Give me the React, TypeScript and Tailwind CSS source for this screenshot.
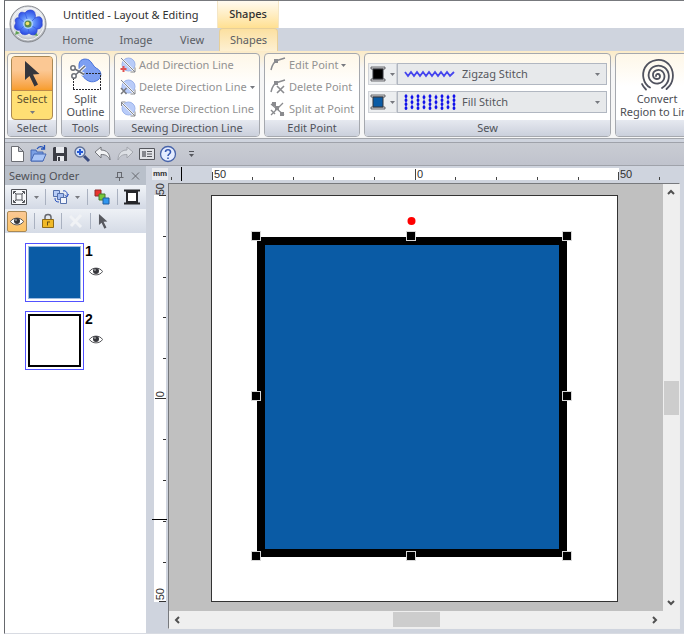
import type {ReactNode} from 'react'
import clsx from 'clsx'

type IconProps = {className?: string}

const FlowerLogo = () => (
  <svg width="38" height="38" viewBox="0 0 38 38">
    <defs>
      <radialGradient id="orb" cx="50%" cy="40%" r="60%">
        <stop offset="0%" stopColor="#ffffff"/>
        <stop offset="70%" stopColor="#dfe2e7"/>
        <stop offset="100%" stopColor="#a5a8ae"/>
      </radialGradient>
      <radialGradient id="bloom" cx="50%" cy="50%" r="52%">
        <stop offset="0%" stopColor="#c9e2ff"/>
        <stop offset="45%" stopColor="#5f90fa"/>
        <stop offset="100%" stopColor="#2a48e2"/>
      </radialGradient>
    </defs>
    <circle cx="19" cy="19" r="18" fill="url(#orb)" stroke="#85888e"/>
    <circle cx="19" cy="19" r="16" fill="none" stroke="#f7f8fa"/>
    <path d="M7 26L6 30L11 28ZM27 27L29 31L24 30Z" fill="#5fa052"/>
    <path
      d="M10 13C9 8 12 6 16 8C18 4 26 4 26 9C27 11 26 12 26 13C31 10 34 13 33 18C34 22 31 24 28 24C29 29 24 32 20 28C17 31 11 30 11 25C6 26 4 22 7 18C5 15 7 12 10 13Z"
      fill="url(#bloom)" stroke="#2e46cf" strokeWidth="0.800"
    />
    <path d="M16 8L18 14M26 13L22 17M28 24L23 21M20 28L19 23M11 25L15 21M10 13L15 17" stroke="#3a5ee6" strokeWidth="0.800"/>
    <circle cx="19" cy="19" r="5" fill="#a5d0ff"/>
    <circle cx="19" cy="19" r="3.500" fill="#5d8a4e"/>
    <circle cx="18.500" cy="18.500" r="1.800" fill="#f4e36b"/>
  </svg>
)

const CursorIcon = ({className}: IconProps) => (
  <svg className={className} viewBox="0 0 16 26">
    <path d="M1 0L1 19L5.500 15L10.500 25.500L14 23.500L9 13.500L15.500 13Z" fill="#35363c"/>
  </svg>
)

const SplitIcon = () => (
  <svg width="32" height="34" viewBox="0 0 32 34">
    <path d="M9 7C9 1 15 0 19 2C22 4 23 8 26 10C33 13 32 21 26 23C19 26 14 20 11 16C9 13 9 11 9 7Z" fill="#7d9ff2" stroke="#4a73d8"/>
    <path d="M3.500 31V20M3 31.500H31M30.500 31V15.500M30 15.500H13" fill="none" stroke="#26262c" strokeDasharray="2 1"/>
    <g fill="none" stroke="#6c6f76" strokeWidth="1.500">
      <path d="M4 11L14 16.500M5 17L15 8" stroke="#fff" strokeWidth="3.500"/>
      <circle cx="3" cy="10" r="2.200" fill="#fff"/>
      <circle cx="4" cy="18" r="2.200" fill="#fff"/>
      <path d="M5 11L14 16.500M6 16.500L15 8"/>
    </g>
  </svg>
)

const DirectionIcon = ({kind}: {kind: 'add' | 'delete' | 'reverse'}) => (
  <svg width="16" height="16" viewBox="0 0 16 16">
    <circle cx="8.500" cy="7.500" r="6.500" fill="#b9ccf9" stroke="#9db4ea"/>
    <path d="M1 1L15 15" stroke="#f4f6fb" strokeWidth="2"/>
    <path d="M1 1L15 15M15 10.500V15H10.500" fill="none" stroke="#85878c"/>
    {kind === 'add' && <path d="M3.500 9V15M0.500 12H6.500" stroke="#e05252" strokeWidth="2"/>}
    {kind === 'delete' && <path d="M1 9L6.500 15M6.500 9L1 15" stroke="#77797e" strokeWidth="1.500"/>}
    {kind === 'reverse' && <path d="M1.500 5V1H5.500" fill="none" stroke="#85878c"/>}
  </svg>
)

const PointIcon = ({kind}: {kind: 'edit' | 'delete' | 'split'}) => (
  <svg width="16" height="16" viewBox="0 0 16 16" fill="none" stroke="#8a8b8f">
    {kind === 'split' ? (
      <>
        <path d="M1 3L14 14M1 14L13 2" strokeWidth="1.300"/>
        <path d="M2 1H6V5H2ZM5 5H9V9H5ZM10 11H14V15H10Z" fill="#8a8b8f" stroke="none"/>
        <path d="M1 9L5 13" strokeWidth="1.500"/>
      </>
    ) : (
      <>
        <path d="M1 13C2 8 4 5 7 3.500L15 1" strokeWidth="1.500"/>
        <path d="M4 2H8V6H4Z" fill="#8a8b8f" stroke="none"/>
        {kind === 'delete' && <path d="M7 7L14 14M14 7L7 14" strokeWidth="1.600"/>}
      </>
    )}
  </svg>
)

const SpoolIcon = ({color}: {color: string}) => (
  <svg width="16" height="16" viewBox="0 0 16 16">
    <path d="M1 1H15V3H1ZM1 13H15V15H1Z" fill="#d9dadd" stroke="#4b4c52" strokeWidth="0.800"/>
    <path d="M3 3H13V13H3Z" fill={color} stroke="#33343a"/>
  </svg>
)

const SpiralIcon = () => (
  <svg width="34" height="34" viewBox="0 0 34 34" fill="none" stroke="#50525e" strokeWidth="1.800" strokeLinecap="round">
    <path d="M16 18C16 15 20 15.500 20 18.500C20 22 13.500 22 13 17.500C12.500 12 19 10.500 22.500 13.500C26.500 18 24 25 18 25.500C11 26 7.500 20 9 14.500C11 7.500 19 6 24.500 9.500C30 13.500 30 22 26 26.500C25 28 23.500 29 22 30"/>
    <path d="M10 29.500C3 25.500 1.500 16 5 9.500C10 1 22 -0.500 28.500 6C34.500 12.500 34 22 29.500 28L26.500 31"/>
    <path d="M2 26C3 28.500 4.500 30 6 31.500"/>
  </svg>
)

const ZigzagPreview = () => (
  <svg width="52" height="10" viewBox="0 0 52 10">
    <path d="M1 3L4 7L7 3L10 7L13 3L16 7L19 3L22 7L25 3L28 7L31 3L34 7L37 3L40 7L43 3L46 7L50 3" fill="none" stroke="#4646ee" strokeWidth="1.800"/>
  </svg>
)

const FillPreview = () => (
  <svg width="52" height="16" viewBox="0 0 52 16" stroke="#1111ea" strokeLinecap="round">
    {[2, 8, 14, 20, 26, 32, 38, 44, 50].map((x, i) => (
      <g key={x}>
        <path d={`M${x} 1V15`} strokeWidth="1" opacity="0.6"/>
        <path d={i % 2 ? `M${x} 3V3.500M${x} 8V8.500M${x} 13V13.500` : `M${x} 2V2.500M${x} 6V6.500M${x} 10V10.500M${x} 14V14.500`} strokeWidth="2.800"/>
      </g>
    ))}
  </svg>
)

const Caret = ({className = 'text-[#77797f]'}: IconProps) => (
  <svg className={clsx('shrink-0', className)} width="5" height="3" viewBox="0 0 5 3">
    <path d="M0 0H5L2.500 3Z" fill="currentColor"/>
  </svg>
)

const EyeIcon = () => (
  <svg width="14" height="9" viewBox="0 0 14 9">
    <path d="M0.500 4.500C3 0 11 0 13.500 4.500C11 9 3 9 0.500 4.500Z" fill="#fff" stroke="#55565a"/>
    <circle cx="7" cy="4" r="3" fill="#37383d"/>
    <circle cx="6" cy="3" r="0.800" fill="#dddddd"/>
  </svg>
)

const quickActions: {name: string, icon: ReactNode}[] = [
  {name: 'New', icon: <path d="M3.500 1.500H10.500L15.500 6.500V16.500H3.500ZM10.500 1.500V6.500H15.500" fill="#fff" stroke="#6c6e74"/>},
  {
    name: 'Open', icon: <>
      <path d="M2 16V5H7L8 7H14V16Z" fill="#7ba0e4" stroke="#4668b4"/>
      <path d="M2 16L5 9H17L14 16Z" fill="#a9c5f7" stroke="#4668b4"/>
      <path d="M8 4C10 1 13 1 15 3M15.500 0V4H12" fill="none" stroke="#2653b8" strokeWidth="1.300"/>
    </>
  },
  {
    name: 'Save', icon: <>
      <path d="M3 2H15L16 3V16H2V3Z" fill="#3c3e46"/>
      <path d="M5 2H13V8H5ZM6 11H13V16H6Z" fill="#e9ebef"/>
      <path d="M7 12H9V16H7Z" fill="#3c3e46"/>
    </>
  },
  {
    name: 'Zoom', icon: <>
      <path d="M11 11L16 16" stroke="#3a4c80" strokeWidth="3"/>
      <circle cx="7" cy="7" r="5" fill="#cfe0fc" stroke="#5f6f94" strokeWidth="1.300"/>
      <path d="M4 7H10M7 4V10" stroke="#2559d6" strokeWidth="2"/>
    </>
  },
  {name: 'Undo', icon: <path d="M1 7L7 2V5C13 5 16 9 16 15C14 11 12 9.500 7 9.500V13Z" fill="#f2f3f5" stroke="#74767c"/>},
  {name: 'Redo', icon: <path d="M17 7L11 2V5C5 5 2 9 2 15C4 11 6 9.500 11 9.500V13Z" fill="#dcdfe4" stroke="#a3a6ad"/>},
  {
    name: 'Design property', icon: <>
      <path d="M1.500 3.500H16.500V14.500H1.500Z" fill="#e1e3e7" stroke="#55575d"/>
      <path d="M4 6H8V12H4Z" fill="#85878d"/>
      <path d="M9 6.500H14M9 9H14M9 11.500H14" stroke="#55575d"/>
    </>
  },
  {
    name: 'Help', icon: <>
      <circle cx="9" cy="9" r="7.500" fill="#e4ecff" stroke="#4763a9" strokeWidth="1.300"/>
      <path d="M6.500 7C6.500 4 11.500 4 11.500 7C11.500 9 9 9 9 11M9 12.500V14" fill="none" stroke="#3558b4" strokeWidth="1.600"/>
    </>
  },
]

const RibbonGroup = ({title, className, children}: {title: string, className: string, children: ReactNode}) => (
  <section className={clsx('flex h-[84px] shrink-0 flex-col overflow-hidden rounded-sm border border-[#a5a8ae] bg-linear-to-b from-[#fef7e8] to-white to-40%', className)}>
    <div className="min-h-0 grow">{children}</div>
    <div className="h-4 shrink-0 bg-linear-to-b from-[#e6e9f0] to-[#cbd0dc] text-center leading-4 text-[#50535a]">{title}</div>
  </section>
)

const RibbonItem = ({icon, label, menu}: {icon: ReactNode, label: string, menu?: boolean}) => (
  <button disabled className="flex h-[22px] items-center gap-[3px] whitespace-nowrap text-[#929292]">
    {icon}
    <span>{label}</span>
    {menu && <Caret/>}
  </button>
)

const StitchRow = ({name, color, preview, label}: {name: string, color: string, preview: ReactNode, label: string}) => (
  <div className="flex h-[22px]">
    <button aria-label={name + ' color'} className="flex w-[29px] items-center justify-center gap-1 border border-[#d0d3d8] bg-[#eceef0]">
      <SpoolIcon color={color}/>
      <Caret/>
    </button>
    <div className="flex grow items-center border border-[#b1b7c1] bg-[#e7e9eb] px-1.5">
      {preview}
      <select aria-label={name} className="ml-1.5 grow appearance-none bg-transparent text-[#55575d] outline-none">
        <option>{label}</option>
      </select>
      <Caret/>
    </div>
  </div>
)

const Ribbon = () => (
  <div className="flex gap-1 overflow-hidden border-b border-[#a3a6ac] bg-linear-to-b from-[#fcebc6] to-[#f6f6f6] to-20% px-0.5 pt-0.5 pb-px">
    <RibbonGroup title="Select" className="w-[50px]">
      <button className="mx-[3px] mt-0.5 flex h-16 w-[42px] flex-col items-center overflow-hidden rounded-sm border border-[#a98854] bg-[#ffdf74] text-[#5c512f]">
        <span className="flex h-[34px] w-full items-center justify-center border-b border-[#c08a48] bg-linear-to-b from-[#fbc894] from-40% to-[#f79d28]">
          <CursorIcon className="h-[26px] w-4"/>
        </span>
        <span className="leading-4">Select</span>
        <Caret className="mt-1 text-[#77797f]"/>
      </button>
    </RibbonGroup>
    <RibbonGroup title="Tools" className="w-[49px]">
      <button className="mt-1 flex w-full flex-col items-center text-[#4c4e54]">
        <SplitIcon/>
        <span className="leading-[13px]">Split</span>
        <span className="leading-[13px]">Outline</span>
      </button>
    </RibbonGroup>
    <RibbonGroup title="Sewing Direction Line" className="w-[146px]">
      <div className="pl-[5px]">
        <RibbonItem icon={<DirectionIcon kind="add"/>} label="Add Direction Line"/>
        <RibbonItem icon={<DirectionIcon kind="delete"/>} label="Delete Direction Line" menu/>
        <RibbonItem icon={<DirectionIcon kind="reverse"/>} label="Reverse Direction Line"/>
      </div>
    </RibbonGroup>
    <RibbonGroup title="Edit Point" className="w-24">
      <div className="pl-[5px]">
        <RibbonItem icon={<PointIcon kind="edit"/>} label="Edit Point" menu/>
        <RibbonItem icon={<PointIcon kind="delete"/>} label="Delete Point"/>
        <RibbonItem icon={<PointIcon kind="split"/>} label="Split at Point"/>
      </div>
    </RibbonGroup>
    <RibbonGroup title="Sew" className="w-[247px]">
      <div className="flex flex-col gap-1.5 px-[3px] pt-[9px]">
        <StitchRow name="Line sew type" color="#000000" preview={<ZigzagPreview/>} label="Zigzag Stitch"/>
        <StitchRow name="Region sew type" color="#0a5ba5" preview={<FillPreview/>} label="Fill Stitch"/>
      </div>
    </RibbonGroup>
    <RibbonGroup title="" className="w-[84px]">
      <button className="mt-1 flex w-full flex-col items-center whitespace-nowrap text-[#4c4e54]">
        <SpiralIcon/>
        <span className="leading-[13px]">Convert</span>
        <span className="leading-[13px]">Region to Line</span>
      </button>
    </RibbonGroup>
  </div>
)

const QuickAccess = () => (
  <div className="mt-[3px] flex h-6 items-center border-y border-[#9fa2aa] bg-linear-to-b from-[#c9ccd3] to-[#c0c3cd]">
    <div className="ml-px grid w-[173px] grid-cols-8">
      {quickActions.map(({name, icon}) => (
        <button key={name} title={name} className="flex justify-center">
          <svg width="18" height="18" viewBox="0 0 18 18">{icon}</svg>
        </button>
      ))}
    </div>
    <button title="Customize" className="ml-2.5 flex flex-col items-center gap-0.5 text-[#55575d]">
      <span className="h-px w-[5px] bg-[#55575d]"/>
      <Caret className="text-[#55575d]"/>
    </button>
  </div>
)

const Divider = () => <span className="h-4 w-px bg-[#a9b1c0]"/>

const SewingOrder = () => (
  <aside className="flex w-[141px] shrink-0 flex-col">
    <div className="flex h-[19px] items-center bg-[#b9c0ca] px-1 text-[#4f5157]">
      <h2 className="grow">Sewing Order</h2>
      <button title="Auto hide">
        <svg width="16" height="10" viewBox="0 0 16 10" fill="none" stroke="#66696f"><path d="M5 1.500H10M5.500 1V6M9.500 1V6M3.500 6.500H11.500M7.500 7V10"/></svg>
      </button>
      <button title="Close">
        <svg width="14" height="10" viewBox="0 0 14 10" stroke="#66696f"><path d="M4 1.500L11 8.500M11 1.500L4 8.500"/></svg>
      </button>
    </div>
    <div className="flex h-6 items-center justify-between bg-linear-to-b from-[#f1f4f8] to-[#d3d9e5] px-1.5">
      <button title="Fit">
        <svg width="16" height="16" viewBox="0 0 16 16" fill="none" stroke="#505258">
          <path d="M0.500 0.500H15.500V15.500H0.500Z" fill="#f7f8fa"/>
          <path d="M5 5H11V11H5ZM2.500 5V2.500H5M11 2.500H13.500V5M13.500 11V13.500H11M5 13.500H2.500V11M3 3L5 5M13 3L11 5M13 13L11 11M3 13L5 11"/>
        </svg>
      </button>
      <Caret/>
      <Divider/>
      <button title="Order">
        <svg width="16" height="16" viewBox="0 0 16 16" stroke="#5570aa">
          <path d="M0.500 1.500H6.500V7.500H0.500Z" fill="#b8cdf6"/>
          <path d="M4.500 4.500H10.500V10.500H4.500Z" fill="#a5bff3"/>
          <path d="M7.500 8.500H13.500V14.500H7.500Z" fill="#f2f5fc"/>
          <path d="M10 2C13 1 15 4 14 7M11.500 6L14 8L15.500 5M2 9C2 12 3 13 6 13" fill="none" stroke="#2c55c0"/>
        </svg>
      </button>
      <Caret/>
      <Divider/>
      <button title="Merge colors">
        <svg width="16" height="16" viewBox="0 0 16 16">
          <path d="M1 1H7V7H1Z" fill="#e9342c" stroke="#8d2d2d"/>
          <path d="M5 5H11V11H5Z" fill="#78c83b" stroke="#437a2a"/>
          <path d="M9 9H15V15H9Z" fill="#3096ef" stroke="#205d9c"/>
        </svg>
      </button>
      <Divider/>
      <button title="Thread color">
        <svg width="16" height="16" viewBox="0 0 16 16" fill="#fff" stroke="#25262a">
          <path d="M0 1.500H16M0 14.500H16" strokeWidth="2"/>
          <path d="M3 3H13V13H3Z" strokeWidth="2"/>
        </svg>
      </button>
    </div>
    <div className="flex h-6 items-center gap-[7px] bg-linear-to-b from-[#eef1f6] to-[#d5dbe6] pl-0.5">
      <button title="Show all" className="flex h-[21px] w-5 items-center justify-center rounded-xs border border-[#a98854] bg-linear-to-b from-[#fbc894] to-[#fdc463]">
        <EyeIcon/>
      </button>
      <Divider/>
      <button title="Lock">
        <svg width="12" height="16" viewBox="0 0 12 16">
          <path d="M3 7V4C3 0.500 9 0.500 9 4V7" fill="none" stroke="#66686e" strokeWidth="1.500"/>
          <path d="M0.500 6.500H11.500V14.500H0.500Z" fill="#f0b927" stroke="#8d6a18"/>
          <path d="M5 9H8M5.500 9V12.500" stroke="#6a5012"/>
        </svg>
      </button>
      <Divider/>
      <button title="Delete" disabled>
        <svg width="14" height="14" viewBox="0 0 14 14" stroke="#f0f2f5" strokeWidth="3"><path d="M1 2L12 13M12 1L2 12"/></svg>
      </button>
      <Divider/>
      <button title="Select object"><CursorIcon className="h-[15px] w-2.5 opacity-80"/></button>
    </div>
    <ol className="flex grow flex-col gap-[9px] bg-white pt-2.5 pl-5">
      {['bg-[#0a5ba5] border border-[#9dbbe0]', 'bg-white border-2 border-black'].map((swatch, i) => (
        <li key={swatch} className="flex gap-px">
          <div className="size-[59px] border border-[#5252ff] p-0.5">
            <div className={clsx('size-full', swatch)}/>
          </div>
          <div className="text-black">
            <div className="font-['Liberation_Sans'] text-sm leading-4 font-bold">{i + 1}</div>
            <button title="Visible" className="ml-1 block pt-2"><EyeIcon/></button>
          </div>
        </li>
      ))}
    </ol>
  </aside>
)

const minor = [41, 82, 122, 163, 244, 285, 326, 367]

const TopRuler = () => (
  <div className="relative h-4 grow overflow-hidden pl-11 font-['Liberation_Sans'] text-[11px] leading-3 text-[#303030]">
    <div className="relative mt-px h-3 w-[407px] bg-white">
      <svg className="absolute inset-0 overflow-visible" width="407" height="12" stroke="#444">
        <path d="M0.500 4V12M203.500 1V12M406.500 4V12M-40.500 9V12M447.500 9V12"/>
        <path d={minor.map(x => `M${x - 0.5} 9V12`).join('')}/>
        <path d="M-30.500 -1V13" stroke="#000"/>
      </svg>
      <span className="absolute left-0.5">50</span>
      <span className="absolute left-[205px]">0</span>
      <span className="absolute left-[408px]">50</span>
    </div>
  </div>
)

const SideRuler = () => (
  <div className="relative w-[15px] shrink-0 pt-3 font-['Liberation_Sans'] text-[11px] leading-3 text-[#303030]">
    <div className="relative ml-0.5 h-[407px] w-3 bg-white">
      <svg className="absolute inset-0 overflow-visible" width="12" height="407" stroke="#333">
        <path d="M5 0.500H12M1 203.500H12M5 406.500H12"/>
        <path d={minor.map(y => `M9 ${y + 0.5}H12`).join('')}/>
        <path d="M-2 324.500H13" stroke="#000"/>
      </svg>
      <span className="absolute -top-3 [writing-mode:vertical-rl] rotate-180">50</span>
      <span className="absolute top-[196px] [writing-mode:vertical-rl] rotate-180">0</span>
      <span className="absolute top-[393px] [writing-mode:vertical-rl] rotate-180">50</span>
    </div>
  </div>
)

const handles = [[41, 37], [196, 37], [352, 37], [41, 197], [352, 197], [41, 357], [196, 357], [352, 357]]

const Artboard = () => (
  <svg className="block border border-[#333] bg-white" width="407" height="407" viewBox="1 1 405 405" shapeRendering="crispEdges">
    <rect x="50" y="46" width="302" height="312" fill="#0a5ba5" stroke="#000" strokeWidth="8"/>
    {handles.map(([x, y]) => (
      <rect key={`${x}-${y}`} x={x - 0.5} y={y - 0.5} width="9" height="9" fill="#000" stroke="#d8d8d8"/>
    ))}
    <circle cx="200.500" cy="26" r="4" fill="#f00" shapeRendering="auto"/>
  </svg>
)

const ScrollArrow = ({d}: {d: string}) => (
  <svg width="8" height="8" viewBox="0 0 8 8" fill="none" stroke="#505050" strokeWidth="2"><path d={d}/></svg>
)

const Workspace = () => (
  <main className="flex min-w-0 grow flex-col pb-1">
    <div className="flex pt-px">
      <div className="mt-px h-3 w-4 shrink-0 bg-[#e9ebef] text-center font-['Liberation_Sans'] text-[8px] leading-3 font-bold text-[#303030]">mm</div>
      <TopRuler/>
    </div>
    <div className="flex">
      <SideRuler/>
      <div className="mr-1 ml-px grow border border-[#77797d] border-r-[#eeeeee] border-b-[#eeeeee] bg-[#efefef]">
        <div className="flex">
          <div className="grow bg-[#c0c0c0] pt-[11px] pb-[9px] pl-[42px]">
            <Artboard/>
          </div>
          <div className="flex w-4 shrink-0 flex-col items-center py-1">
            <button title="Scroll up"><ScrollArrow d="M1 6L4 3L7 6"/></button>
            <div className="grow basis-0"/>
            <div className="h-[34px] w-[15px] bg-[#cdcdcd]"/>
            <div className="grow basis-0"/>
            <button title="Scroll down"><ScrollArrow d="M1 2L4 5L7 2"/></button>
          </div>
        </div>
        <div className="flex h-[17px] items-center pr-5 pl-1">
          <button title="Scroll left"><ScrollArrow d="M6 1L3 4L6 7"/></button>
          <div className="grow basis-0"/>
          <div className="h-[15px] w-[47px] bg-[#cdcdcd]"/>
          <div className="grow basis-0"/>
          <button title="Scroll right"><ScrollArrow d="M2 1L5 4L2 7"/></button>
        </div>
      </div>
    </div>
  </main>
)

const App = () => {
  return (
    <div className="bg-white px-1 pb-0.5 font-['Noto_Sans',sans-serif] text-[11px] leading-4">
      <div className="overflow-hidden border-t border-b border-l border-t-[#77797d] border-b-[#d8dbe2] border-l-[#66686d] bg-[#cfd4de]">
        <header className="flex">
          <div className="z-10 -mr-1 -mb-1 h-10 w-12 shrink-0 pt-1 pl-1">
            <FlowerLogo/>
          </div>
          <div className="-ml-11 grow">
            <div className="flex h-[27px] items-center bg-white pl-[58px]">
              <h1 className="w-[154px] whitespace-nowrap text-[#303030]">Untitled - Layout &amp; Editing</h1>
              <div className="h-full w-[62px] border-x border-[#f4e6c6] bg-linear-to-b from-[#fffaf0] to-[#ffe091] text-center leading-[26px] font-medium text-[#303030]">Shapes</div>
            </div>
            <nav className="flex h-[23px] items-end pl-11 text-[#5a5d64]">
              <button className="w-[58px] leading-[22px]">Home</button>
              <button className="w-[58px] leading-[22px]">Image</button>
              <button className="w-[54px] leading-[22px]">View</button>
              <button className="w-[59px] rounded-t-sm border-x border-t border-[#e7cf98] bg-linear-to-b from-[#fce0a0] to-[#fdf0d2] leading-[22px]">Shapes</button>
            </nav>
          </div>
        </header>
        <Ribbon/>
        <QuickAccess/>
        <div className="flex">
          <SewingOrder/>
          <div className="w-1.5 shrink-0"/>
          <Workspace/>
        </div>
      </div>
    </div>
  )
}

export default App
